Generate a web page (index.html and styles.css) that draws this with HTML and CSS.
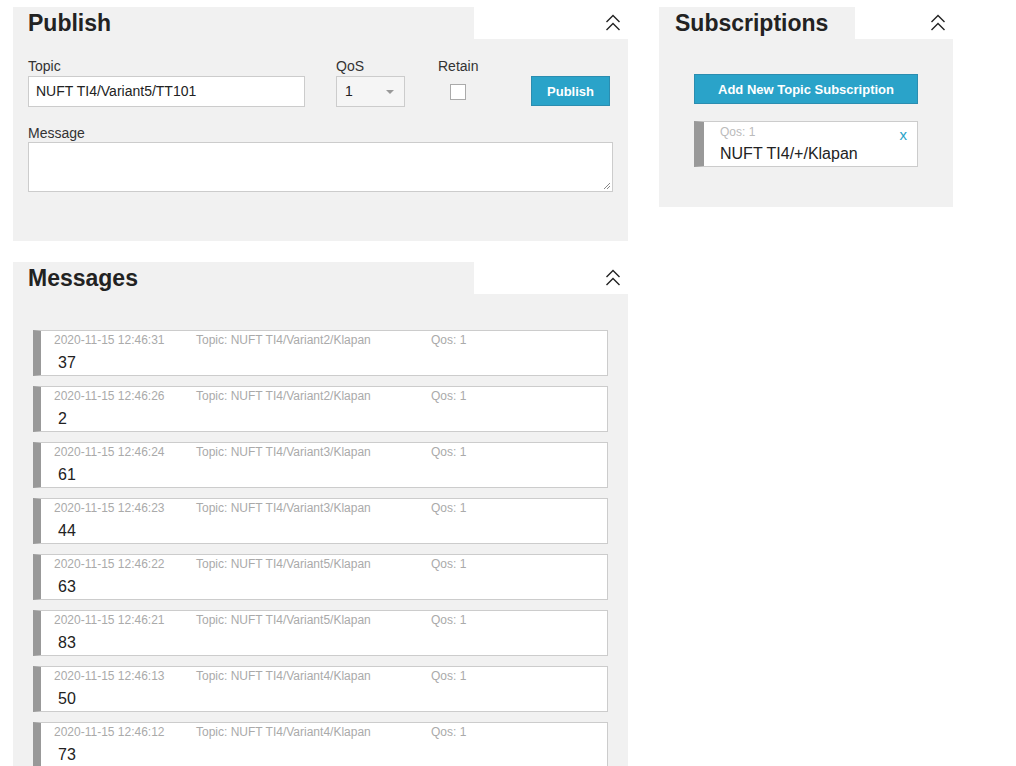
FILE: index.html
```html
<!DOCTYPE html>
<html>
<head>
<meta charset="utf-8">
<link rel="stylesheet" href="styles.css">
</head>
<body>
<div class="page">
  <div class="col-left">
    <section class="panel publish">
      <div class="panel-head">
        <h2 class="panel-title">Publish</h2>
        <div class="panel-toggle">
          <svg width="16" height="19" viewBox="0 0 16 19"><path d="M1.5 9 L8 2.5 L14.5 9 M1.5 17 L8 10.5 L14.5 17" fill="none" stroke="#222" stroke-width="1.4"/></svg>
        </div>
      </div>
      <div class="panel-body pub-body">
        <div class="pub-row">
          <div class="field f-topic">
            <label class="lbl">Topic</label>
            <div class="input">NUFT TI4/Variant5/TT101</div>
          </div>
          <div class="field f-qos">
            <label class="lbl">QoS</label>
            <div class="input select"><span>1</span><span class="caret"></span></div>
          </div>
          <div class="field f-retain">
            <label class="lbl">Retain</label>
            <div class="checkbox"></div>
          </div>
          <div class="field f-btn">
            <button class="btn btn-pub">Publish</button>
          </div>
        </div>
        <div class="field f-msg">
          <label class="lbl">Message</label>
          <div class="textarea">
            <svg class="grip" width="8" height="8" viewBox="0 0 8 8"><path d="M7 1 L1 7 M7 4 L4 7" stroke="#888" stroke-width="1"/></svg>
          </div>
        </div>
      </div>
    </section>

    <section class="panel messages">
      <div class="panel-head">
        <h2 class="panel-title">Messages</h2>
        <div class="panel-toggle">
          <svg width="16" height="19" viewBox="0 0 16 19"><path d="M1.5 9 L8 2.5 L14.5 9 M1.5 17 L8 10.5 L14.5 17" fill="none" stroke="#222" stroke-width="1.4"/></svg>
        </div>
      </div>
      <div class="panel-body msg-body">
        <div class="msg"><div class="meta"><span class="ts">2020-11-15 12:46:31</span><span class="tp">Topic: NUFT TI4/Variant2/Klapan</span><span class="qs">Qos: 1</span></div><div class="val">37</div></div>
        <div class="msg"><div class="meta"><span class="ts">2020-11-15 12:46:26</span><span class="tp">Topic: NUFT TI4/Variant2/Klapan</span><span class="qs">Qos: 1</span></div><div class="val">2</div></div>
        <div class="msg"><div class="meta"><span class="ts">2020-11-15 12:46:24</span><span class="tp">Topic: NUFT TI4/Variant3/Klapan</span><span class="qs">Qos: 1</span></div><div class="val">61</div></div>
        <div class="msg"><div class="meta"><span class="ts">2020-11-15 12:46:23</span><span class="tp">Topic: NUFT TI4/Variant3/Klapan</span><span class="qs">Qos: 1</span></div><div class="val">44</div></div>
        <div class="msg"><div class="meta"><span class="ts">2020-11-15 12:46:22</span><span class="tp">Topic: NUFT TI4/Variant5/Klapan</span><span class="qs">Qos: 1</span></div><div class="val">63</div></div>
        <div class="msg"><div class="meta"><span class="ts">2020-11-15 12:46:21</span><span class="tp">Topic: NUFT TI4/Variant5/Klapan</span><span class="qs">Qos: 1</span></div><div class="val">83</div></div>
        <div class="msg"><div class="meta"><span class="ts">2020-11-15 12:46:13</span><span class="tp">Topic: NUFT TI4/Variant4/Klapan</span><span class="qs">Qos: 1</span></div><div class="val">50</div></div>
        <div class="msg"><div class="meta"><span class="ts">2020-11-15 12:46:12</span><span class="tp">Topic: NUFT TI4/Variant4/Klapan</span><span class="qs">Qos: 1</span></div><div class="val">73</div></div>
      </div>
    </section>
  </div>

  <div class="col-right">
    <section class="panel subs">
      <div class="panel-head">
        <h2 class="panel-title">Subscriptions</h2>
        <div class="panel-toggle">
          <svg width="16" height="19" viewBox="0 0 16 19"><path d="M1.5 9 L8 2.5 L14.5 9 M1.5 17 L8 10.5 L14.5 17" fill="none" stroke="#222" stroke-width="1.4"/></svg>
        </div>
      </div>
      <div class="panel-body sub-body">
        <button class="btn btn-add">Add New Topic Subscription</button>
        <div class="sub">
          <div class="sub-qos">Qos: 1</div>
          <div class="sub-topic">NUFT TI4/+/Klapan</div>
          <span class="sub-x">x</span>
        </div>
      </div>
    </section>
  </div>
</div>
</body>
</html>
```

FILE: styles.css
```css
html, body {
  margin: 0;
  padding: 0;
  background: #fff;
  font-family: "Liberation Sans", Arial, sans-serif;
  color: #333;
  overflow: hidden;
}
.page {
  display: flex;
  align-items: flex-start;
  gap: 31px;
  padding: 7px 0 0 13px;
  height: 759px;
  overflow: hidden;
}
.col-left {
  width: 615px;
  display: flex;
  flex-direction: column;
  gap: 21px;
}
.col-right {
  width: 294px;
}
.panel-head {
  display: flex;
  height: 32px;
}
.panel-title {
  margin: 0;
  width: 461px;
  box-sizing: border-box;
  padding: 3px 0 0 15px;
  background: #f1f1f1;
  font-size: 23px;
  font-weight: bold;
  color: #222;
  line-height: 27px;
}
.subs .panel-title {
  width: 196px;
  padding-left: 16px;
}
.panel-toggle {
  flex: 1;
  background: #fff;
  display: flex;
  justify-content: flex-end;
  padding: 6px 7px 0 0;
  box-sizing: border-box;
}
.panel-body {
  background: #f1f1f1;
}
.pub-body {
  padding: 19px 15px 0 15px;
  height: 202px;
  box-sizing: border-box;
}
.pub-row {
  display: flex;
  align-items: flex-start;
}
.lbl {
  display: block;
  font-size: 14px;
  line-height: 16px;
  height: 18px;
  color: #333;
}
.input {
  height: 31px;
  box-sizing: border-box;
  border: 1px solid #ccc;
  background: #fff;
  font-size: 14px;
  line-height: 29px;
  padding: 0 7px;
  color: #222;
}
.f-topic { width: 277px; }
.f-qos { width: 69px; margin-left: 31px; }
.f-retain { width: 60px; margin-left: 33px; }
.f-btn { margin-left: 33px; padding-top: 18px; }
.select {
  display: flex;
  justify-content: space-between;
  align-items: center;
  padding: 0 10px 0 8px;
  background: #f5f5f5;
}
.caret {
  width: 0;
  height: 0;
  border-left: 4px solid transparent;
  border-right: 4px solid transparent;
  border-top: 4px solid #999;
}
.checkbox {
  width: 14px;
  height: 14px;
  border: 1px solid #aaa;
  background: #fff;
  margin: 8px 0 0 12px;
}
.btn {
  background: #2aa3c9;
  color: #fff;
  border: 1px solid #2b8db0;
  font-family: "Liberation Sans", Arial, sans-serif;
  font-weight: bold;
  font-size: 13px;
  cursor: pointer;
}
.btn-pub {
  width: 79px;
  height: 30px;
}
.f-msg {
  margin-top: 18px;
}
.f-msg .lbl { height: 17px; }
.textarea {
  position: relative;
  height: 50px;
  box-sizing: border-box;
  border: 1px solid #ccc;
  background: #fff;
}
.grip {
  position: absolute;
  right: 1px;
  bottom: 1px;
}
.msg-body {
  padding: 36px 20px 0 20px;
  height: 480px;
  display: flex;
  flex-direction: column;
  gap: 10px;
}
.msg {
  flex: none;
  height: 46px;
  box-sizing: border-box;
  background: #fff;
  border: 1px solid #ccc;
  border-left: 8px solid #999;
  padding: 2px 0 0 13px;
}
.meta {
  display: flex;
  font-size: 12px;
  line-height: 14px;
  color: #aaa;
}
.ts { width: 142px; }
.tp { width: 235px; }
.val {
  font-size: 16px;
  line-height: 18px;
  margin-top: 7px;
  padding-left: 4px;
  color: #222;
}
.sub-body {
  height: 168px;
  box-sizing: border-box;
  padding: 35px 35px 0 35px;
}
.btn-add {
  display: block;
  width: 224px;
  height: 30px;
  font-size: 13px;
}
.sub {
  position: relative;
  margin-top: 17px;
  height: 46px;
  box-sizing: border-box;
  background: #fff;
  border: 1px solid #ccc;
  border-left: 10px solid #999;
  padding: 3px 0 0 16px;
}
.sub-qos {
  font-size: 12px;
  line-height: 14px;
  color: #bbb;
}
.sub-topic {
  font-size: 16px;
  line-height: 18px;
  margin-top: 6px;
  color: #222;
}
.sub-x {
  position: absolute;
  right: 10px;
  top: 4px;
  color: #2aa3c9;
  font-size: 15px;
}
```
